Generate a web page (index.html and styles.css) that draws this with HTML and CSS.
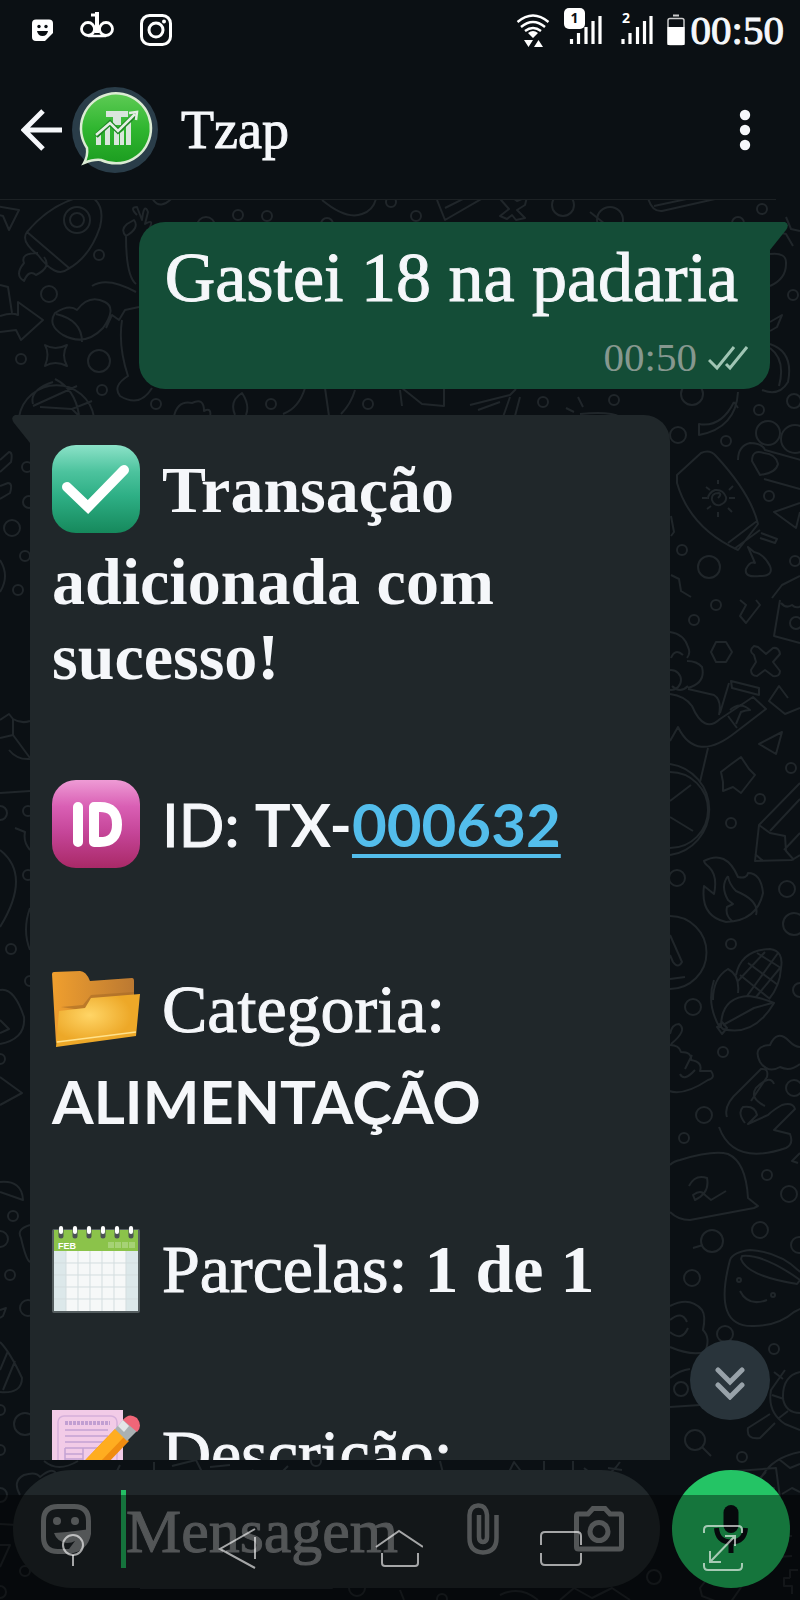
FILE: index.html
```html
<!DOCTYPE html>
<html lang="pt-BR">
<head>
<meta charset="utf-8">
<meta name="viewport" content="width=device-width, initial-scale=1">
<title>Tzap</title>
<link rel="stylesheet" href="styles.css">
</head>
<body>
<div class="phone">
  <div class="status-bar">
    <div class="status-group notices">
      <svg width="22" height="60" viewBox="32 0 22 60" aria-hidden="true"><path fill="#fff" d="M36 19.500h13q4 0 4 4V33l-8 8h-9q-4 0-4-4V23.500q0-4 4-4z"/><circle cx="39" cy="26.500" r="1.700" fill="#0b1014"/><circle cx="46" cy="26.500" r="1.700" fill="#0b1014"/><path d="M37 31h11q-1 5-5.500 5T37 31z" fill="#0b1014"/></svg>
      <svg width="34" height="60" viewBox="80 0 34 60" fill="none" stroke="#fff" aria-hidden="true"><circle cx="88" cy="29" r="6.500" stroke-width="2.800"/><circle cx="106" cy="29" r="6.500" stroke-width="2.800"/><path d="M88 36h18" stroke-width="2.500"/><path d="M97 12v21" stroke-width="4"/><path d="M91 15h4" stroke-width="3"/></svg>
      <svg width="32" height="60" viewBox="136 0 32 60" fill="none" stroke="#fff" stroke-width="3" aria-hidden="true"><rect x="137.500" y="15.500" width="29" height="29" rx="8"/><circle cx="152" cy="30" r="7"/><circle cx="160" cy="21.500" r="2" fill="#fff" stroke="none"/></svg>
    </div>
    <div class="status-group signals">
      <svg width="34" height="60" viewBox="515 0 34 60" fill="none" stroke="#fff" stroke-width="2.400" aria-hidden="true"><path d="M516.500 22q15.500-13 31 0M520 27q12-10 24 0M524 31q8-6 16 0"/><path fill="#fff" stroke="none" d="M527 33q5-4 10 0l-5 5zM523 40h9l-4.500 7zM533 47h9l-4.500-7z"/></svg>
      <svg width="43" height="60" viewBox="563 0 43 60" aria-hidden="true"><path stroke="#fff" stroke-width="3.200" d="M570.500 39v5M577.500 33v11M585 27v17M592 21v23M599 16v28"/><rect x="563" y="8" width="21" height="21" rx="5" fill="#fff"/><text class="sim" x="573.500" y="23" text-anchor="middle" fill="#0b1014">1</text></svg>
      <svg width="32" height="60" viewBox="621 0 32 60" aria-hidden="true"><path stroke="#fff" stroke-width="3.200" d="M623 39v5M630 33v11M637.500 27v17M644.500 21v23M651 16v28"/><text class="sim" x="626" y="23" text-anchor="middle" fill="#fff">2</text></svg>
      <svg width="18" height="60" viewBox="667 0 18 60" aria-hidden="true"><path d="M673 15.500h6" stroke="#ccc" stroke-width="2"/><rect x="668" y="18.500" width="16" height="26" rx="2" fill="none" stroke="#ccc" stroke-width="1.500"/><path d="M667.500 27h17v18h-17z" fill="#fff"/></svg>
    </div>
    <time class="clock">00:50</time>
  </div>

  <header class="chat-header">
    <button class="plain" type="button" aria-label="Voltar"><svg width="42" height="42" viewBox="0 0 42 42" fill="none" stroke="#f5f7fa" stroke-width="5"><path d="M22 2L3 21l19 19M3 21h38"/></svg></button>
    <svg class="avatar" width="86" height="86" viewBox="0 0 86 86" aria-hidden="true">
      <defs><linearGradient id="bubble" x2="0" y2="1"><stop stop-color="#5ecb55"/><stop offset=".5" stop-color="#30b630"/><stop offset="1" stop-color="#1c9d20"/></linearGradient></defs>
      <circle cx="43" cy="43" r="43" fill="#2a3d49"/>
      <path fill="url(#bubble)" stroke="#dcebd4" stroke-width="2.500" d="M15 61A35 35 0 1 1 29 73q-7-1-17 3 4-7 3-15z"/>
      <path fill="#d9e6dc" d="M34 24h22v6h-7v8h-8v-8h-7zM24 50l5-4v12h-5zM33 43l5-4v19h-5zM42 43l5 3v12h-5zM48 46l4-3v15h-4zM54 38l5-5v25h-5z"/>
      <path fill="none" stroke="#1d8522" stroke-width="5" d="M24 49l14-13 8 8 18-17"/>
      <path fill="none" stroke="#e4eee4" stroke-width="2.500" d="M24 48l14-12 8 8 17-17M57 26l8-1-1 8"/>
    </svg>
    <h1 class="contact">Tzap</h1>
    <button class="plain menu" type="button" aria-label="Mais opções"><svg width="12" height="44" viewBox="0 0 12 44" fill="#f5f7fa"><circle cx="6" cy="7" r="5.200"/><circle cx="6" cy="22" r="5.200"/><circle cx="6" cy="37" r="5.200"/></svg></button>
  </header>

  <main class="conversation">
    <svg class="wallpaper" viewBox="0 200 800 1400" preserveAspectRatio="xMidYMin slice" aria-hidden="true">
      <g id="dots">
        <circle cx="238" cy="215" r="5"/><circle cx="267" cy="216" r="5"/><circle cx="391" cy="202" r="5"/><circle cx="99" cy="255" r="5"/><circle cx="49" cy="294" r="8"/><circle cx="99" cy="361" r="11"/><circle cx="21" cy="359" r="5"/><circle cx="102" cy="390" r="5"/><circle cx="156" cy="404" r="5"/><circle cx="271" cy="404" r="5"/><circle cx="368" cy="404" r="5"/><circle cx="416" cy="216" r="5"/><circle cx="563" cy="205" r="11"/><circle cx="762" cy="209" r="5"/><circle cx="610" cy="220" r="13"/><circle cx="738" cy="223" r="6"/><circle cx="206" cy="226" r="9"/><circle cx="327" cy="224" r="6"/>
        <circle cx="543" cy="402" r="5"/><circle cx="614" cy="400" r="5"/><circle cx="692" cy="394" r="11"/><circle cx="759" cy="410" r="5"/><circle cx="794" cy="401" r="7"/><circle cx="793" cy="295" r="5"/><circle cx="678" cy="435" r="8"/><circle cx="726" cy="441" r="5"/><circle cx="768" cy="433" r="12"/><circle cx="795" cy="439" r="14"/><circle cx="769" cy="496" r="5"/><circle cx="682" cy="550" r="5"/><circle cx="709" cy="567" r="11"/><circle cx="795" cy="561" r="5"/>
        <circle cx="12" cy="528" r="8"/><circle cx="25" cy="556" r="5"/><circle cx="18" cy="590" r="5"/><circle cx="27" cy="467" r="5"/><circle cx="29" cy="502" r="6"/><circle cx="0" cy="813" r="7"/><circle cx="28" cy="811" r="5"/><circle cx="28" cy="875" r="5"/><circle cx="11" cy="949" r="5"/><circle cx="30" cy="981" r="5"/><circle cx="0" cy="1059" r="5"/><circle cx="13" cy="1216" r="5"/><circle cx="0" cy="1239" r="8"/><circle cx="10" cy="1275" r="5"/><circle cx="28" cy="1308" r="8"/><circle cx="0" cy="1410" r="5"/><circle cx="25" cy="1424" r="11"/><circle cx="0" cy="1450" r="5"/><circle cx="0" cy="1495" r="7"/><circle cx="25" cy="1571" r="5"/><circle cx="0" cy="1592" r="6"/>
        <circle cx="716" cy="605" r="5"/><circle cx="694" cy="620" r="5"/><circle cx="791" cy="768" r="5"/><circle cx="760" cy="799" r="5"/><circle cx="731" cy="823" r="5"/><circle cx="677" cy="878" r="8"/><circle cx="787" cy="889" r="8"/><circle cx="794" cy="924" r="11"/><circle cx="731" cy="944" r="5"/><circle cx="693" cy="1007" r="8"/><circle cx="800" cy="990" r="7"/><circle cx="723" cy="1052" r="5"/><circle cx="794" cy="1088" r="8"/><circle cx="704" cy="1115" r="8"/><circle cx="684" cy="1138" r="5"/><circle cx="767" cy="1175" r="5"/><circle cx="789" cy="1194" r="8"/><circle cx="760" cy="1230" r="8"/><circle cx="712" cy="1241" r="11"/><circle cx="799" cy="1245" r="8"/><circle cx="692" cy="1278" r="8"/><circle cx="725" cy="1334" r="8"/><circle cx="774" cy="1349" r="5"/><circle cx="742" cy="1457" r="5"/><circle cx="695" cy="1440" r="10"/><circle cx="654" cy="1577" r="7"/><circle cx="357" cy="1588" r="8"/><circle cx="442" cy="1599" r="5"/><circle cx="316" cy="1461" r="5"/>
      </g>
      <path d="M-4 206l23 4-10 20-6-14-8-2M27 232Q52 202 88 195q18 8 12 32-10 30-32 42-12 10-30-14-18-14-11-23zM27 232l42 36M38 253q-18 0-14 10-10 12 0 18 5-12 12-6 16-8 8-18"/>
      <circle cx="77" cy="220" r="13"/><circle cx="77" cy="220" r="7"/>
      <path d="M152 198q8 14 22-2M322 200q24 20 40 14 12-4 14-16M137 215q-8-8 0-8l5 13q2-18 6-8l-3 12q10-6 4 5M127 224q-7 6-1 12 14-8 8-16zM126 236q0 40 10 48M92 286q15-10 44 6M55 313q-8 12 8 22 22 12 40-7 14-20 2-26-16-8-28 8-8-6-22 3zM56 314q26 6 26 28M106 328l6-13 7 5 6-10 14-3M122 320q-4 26 6 56-16 10-8 20 20 12 32-8M0 316q12-4 18-1v-13l25 18-22 20-5-10-16 2M0 285l8 2 4 26M45 345q10 6 22 0-6 10 0 21-12-6-22 0 5-12 0-21z"/>
      <path d="M19 417a38 38 0 0 1 75 0M33 404q-4-14 20-22M55 379q20 10 24 36M33 406l44-20M40 407l32 2 20-8M72 409l8 8M174 416q4-16 18-13 12-6 12 8 8-4 6 6M235 415q-6-14 7-22 8 12 4 22M283 414q16-6 22-26M325 388l4 28M341 414q10-10 14-24M402 388l20 16 22 2V388M402 406l-2-16M470 405l40-10 6-6M478 410l22-8M510 397l-7 20M520 397l-5 19M566 408l8 4M578 397l5 10M580 414q30-3 40 3"/>
      <path d="M437 200l8 20 38-22M445 208l20-10M500 216l9-7-8-9 8-5 8 6 10-4-2 8-8 5 8 8-9 2-4-5-5 4zM590 212l15 12M648 198q4 14 14 13l62-14M654 206l42-9M773 231l13 3 7 12M786 217l5 12 9 2M770 254q17-2 16 10 0 15-16 22M770 322l12-7-5 12-7 4M770 344q24 8 18 38-9 15-26 8M770 348q16 12 9 38M738 392q-2 36-39 43v-11q22 4 35-22M734 402l4 6"/>
      <path d="M677 475l24-22q9-4 15 3 35 38 42 68l-20 26q-48-22-61-67 0-6 0-8zM757 521l-29 22M760 530l-26 19M761 533l16 6-2 4-15-5M748 547l6 5q10 2 16 14 4 10-10 10-16 2-14-7 4-8 9-6zM738 460q0-14 12-17 12 0 15 7l36 10M764 479l36 10M764 453q-12-4-12 8l8 14q16-2 18-11-2-10-14-11zM800 503l-26 9 22 16 4-16M671 516l3 16-3 4M671 575l8 4 2 12 10 6M772 598l10-13 18-9"/>
      <path d="M718 484v-4M718 517v-5M702 498h5M729 498h6M706 487l4 3M728 508l4 4M729 490l4-4M707 509l4-3M718 498q4-4 1-5-8 0-7 7 2 6 8 5 7-3 6-8-3-8-11-7-7 3-7 9"/>
      <path d="M0 460l9-8q4 0 2 10L0 472M0 486l8-3q5 0 2 10l-10 6M0 560q10 16 0 32M0 720l9-6 4 5q8 5 17 2M0 738l13-3V719M13 735l17 23M9 750q8 10 21 9M0 793l30-2M15 828l10 4q-2 10 5 18M0 850q32 25 0 77M30 908q-8 22 0 42M0 990q14-3 24 27 2 22-24 27M0 1020l9 9-9 4M0 1077l22 16-22 12M0 1182q22-2 23 18L0 1192M30 1225q-14 4-9 13 5 22 9 24M0 1310l6-2-3 8-3 2M0 1342q10 10 22 36 0 16-22 14M8 1351L0 1370M15 1361l-12 29"/>
      <path d="M740 600l6 5-6 11 6 7 14-18-4-5M780 600l-6 36 26 7M781 603q5 6 11 2 4 4 9 1"/><circle cx="796" cy="623" r="6"/>
      <path d="M670 632q14 2 18 15 3 6-1 11M671 658q4-10 12-3M687 661q10 0 15 6 4 16-14 21M672 686q8 8 16 0M716 642h10l6 10-6 10h-10l-5-10zM754 655q-6-4 0-9l4 1 8 7 7-6q6-1 7 6l-7 8 7 9q0 6-7 5l-8-6-8 6q-6 0-6-6l5-8z"/>
      <circle cx="671" cy="680" r="10"/>
      <path d="M670 694q15 2 22 12 12 28 28 13l33-22 13 12-30 23q-40 32-58-5l-8 14M688 689l26 6q8 5 5 20M720 713l9-30M731 681l28 7v7l-27-7zM728 716l9 12M730 710q10-9 20 0-4 0-9 2l-5 12M708 748l-8 34M788 698l-9-12-10 15 16 13 15-6M759 744l23-12-6 22zM730 765l11-8 8 12 6 6-14 18-8-6-10 4v-9l-2-10z"/>
      <path d="M670 764a46 46 0 0 1 0 91M670 772a38 38 0 0 1 0 76M670 801l21-16M670 817l23 14M800 783l-41 42-4 36 37-1 8-5M759 825l11 8 15 3 1 15 8 9M770 831l30-32M784 850l16-17M755 854l8 7M704 861q22-12 34 16 9 2 10-4 13 0 15 20-6 28-37 29-26-6-22-36l10 8q4-18-5-27-5-4-5-6zM728 876q1 8 8 15 24 10 20 24M728 876q-8 10 0 24l5 4-6 3q-2 8 5 14"/>
      <path d="M670 916a36 36 0 0 1 0 73M670 935l12 27q-4 7-9 0l-3-7M670 979l15-2M713 1000q0-22 15-31 12 6 10 24M720 1028q-14-24-6-48M721 1027q0-30 28-31 14 2 25 7-20 34-51 26zM723 1025l31-17 18-5M717 1027l5-5 5 6-5 6zM736 975q5-25 34-26 14 2 11 19-1 18-12 31M740 975l30 24M748 963l30 22M757 953l24 15M778 953l-31 43M765 952l-28 30M780 968l-24 29"/>
      <path d="M760 1062q-8-16 10-17 7-16 19-4 6 6 11 6M760 1062q8 12 20 5 10 5 20-3M670 1034q2-10 9-10 9 6-8 20M670 1045q9 0 11 7 11 0 10 8 12 2 9 11h11q5 7-3 9-24 16-39 11M685 1069l7-14M680 1074q4 8 15-4M727 1117q-4-12 12-26l22-22q8-1 6 8l-16 24M765 1106q-16-8-9-18 14-14 18-4M745 1123q-8-10-2-16 12-2 14 8l-9 9 20-9q5-5 14-10 11-3 13 4l-21 21 16 4q4 10-4 14-53 18-67-21"/>
      <path d="M670 1165q4-4 10-5 33-10 48-6 18 8 20 44l10 8-4 2-64 12q-12 0-20-8M689 1186q6-12 18-8 3 15-12 22l-2-5q8-6 12 0l6 5 15-9M693 1248l10-3M800 1153l-8 8 6 2M730 1260q3-8 20-10 30 2 50 22M730 1260q-18 68 24 66 24 0 40-14l8-4M742 1256q22-2 58 24l-3 4q-50-8-56-25zM740 1291q8 16 27 9"/>
      <circle cx="739" cy="1280" r="2"/><circle cx="773" cy="1295" r="2"/>
      <path d="M670 1306q20-10 32 4 4 6 1 20 8 8 2 22-14 4-35-5M670 1320q12-10 17 2M670 1332q12 10 18-4M670 1378q10-8 20-9M670 1407l30-2"/><circle cx="681" cy="1389" r="7"/>
      <path d="M800 1372q-18 4-17 27 3 14 17 14M785 1370l-14 20q-4 22 14 34l15 6M783 1379l-9-7M784 1399l-12-4M788 1411l-9 7M770 1414l-22 14q-2 12 12 10l15-15M702 1447l9 9"/>
      <path d="M760 1480q10-22 40-28M780 1460l10 8 10-4M782 1494l10-6 8 4M760 1478l6-6M708 1480l14-8 54-4 4 30M750 1492h8v8h-8zM766 1488h8v8h-8zM768 1504h7v8h-7zM762 1536h30M762 1536v22l30-2M790 1578v-8h8M790 1578h-6v8h8v8"/>
      <path d="M20 1495q-8-14 4-20 12-4 16 2 12-10 16-4M44 1461q14 12 34 0M120 1465l-8 16M154 1462v16M172 1466l24-6 8 16M210 1467l20-2M252 1470l20 12 16-16M440 1461l4 16M506 1478l8-16 12 16M544 1461v18M573 1461v20M584 1468q20 18 36-6M608 1468l14 2M140 1588h192l-70-22-30 22M400 1590l4 10M500 1595q20-10 38 5M560 1600l14-12 18 10 20-10 18 12M700 1588l14-18 28 16-14 20-26-10zM0 1524l34 2M0 1545h10l-10 22"/>
    </svg>

    <div class="messages">
      <article class="bubble sent">
        <svg class="tail" width="18" height="30" viewBox="0 0 18 30" aria-hidden="true"><path d="M0 0h15q5 2 1 8L0 28z"/></svg>
        <p class="text">Gastei 18 na padaria</p>
        <div class="meta"><time>00:50</time><svg width="40" height="26" viewBox="0 0 40 26" fill="none" stroke="#a0c5b4" stroke-width="3" role="img" aria-label="Entregue"><path d="M1 15l8 8L26 2M18 19l4 4L39 2"/></svg></div>
      </article>

      <article class="bubble received">
        <svg class="tail" width="18" height="30" viewBox="0 0 18 30" aria-hidden="true"><path d="M18 0H3q-5 2-1 8l16 20z"/></svg>
        <div class="row strong">
          <svg class="emoji" viewBox="0 0 88 88" role="img" aria-label="Concluído"><defs><linearGradient id="green" x2="0" y2="1"><stop stop-color="#8ce2c8"/><stop offset=".3" stop-color="#4dc39e"/><stop offset=".58" stop-color="#2eaf85"/><stop offset="1" stop-color="#16895c"/></linearGradient></defs><rect width="88" height="88" rx="24" fill="url(#green)"/><path d="M15 42l21 20 36-37" fill="none" stroke="#fff" stroke-width="10" stroke-linecap="round"/></svg>
          <span>Transação</span>
        </div>
        <p class="text strong follow">adicionada com sucesso!</p>
        <div class="row code">
          <svg class="emoji" viewBox="0 0 88 88" role="img" aria-label="Identificação"><defs><linearGradient id="pink" x2="0" y2="1"><stop stop-color="#ee9bd5"/><stop offset=".3" stop-color="#d95fb4"/><stop offset=".6" stop-color="#c54598"/><stop offset="1" stop-color="#a92967"/></linearGradient></defs><rect width="88" height="88" rx="24" fill="url(#pink)"/><path d="M26 27v35M42 27v35h6q17 0 17-17.500T48 27z" fill="none" stroke="#fff" stroke-width="10" stroke-linecap="round" stroke-linejoin="round"/></svg>
          <span>ID: <b>TX-<a href="#tx-000632">000632</a></b></span>
        </div>
        <div class="row">
          <svg class="emoji" viewBox="0 0 88 88" role="img" aria-label="Pasta"><defs><radialGradient id="folder" cx=".4" cy=".4"><stop stop-color="#ffd566"/><stop offset="1" stop-color="#eda828"/></radialGradient><linearGradient id="back"><stop stop-color="#f09f2e"/><stop offset="1" stop-color="#bb7932"/></linearGradient></defs><path fill="url(#back)" d="M0 9q0-2 2-2l26-1q6 0 10 10l42-3q2 0 2 3v30L4 78z"/><path fill="#a76a24" opacity=".6" d="M9 42l22-2 8-10 43-3v8L36 46z"/><path fill="url(#folder)" d="M7 46l26-3 6-10 49-4-4 42-80 11z"/><path fill="none" stroke="#ffe28c" stroke-width="1.500" d="M5 77l79-10"/></svg>
          <span>Categoria:</span>
        </div>
        <p class="text code follow"><b>ALIMENTAÇÃO</b></p>
        <div class="row">
          <svg class="emoji" viewBox="0 0 88 88" role="img" aria-label="Calendário"><rect y="4" width="88" height="84" rx="2" fill="#555e60"/><path fill="#f6f8f8" d="M2 22h84v64H2z"/><path fill="#dce8ea" d="M2 25h12v61H2zM74 25h12v61H74z"/><path fill="#8bc34a" d="M2 5h84v21H2z"/><path d="M14 26v60M26 26v60M38 26v60M50 26v60M62 26v60M74 26v60M2 38h84M2 50h84M2 62h84M2 74h84" stroke="#d3dddf"/><g stroke="#4b5254" stroke-width="5" stroke-linecap="round"><path d="M9 4v7M23 4v7M37 4v7M51 4v7M65 4v7M79 4v7"/></g><g stroke="#fff" stroke-width="4" stroke-linecap="round"><path d="M9 3v4M23 3v4M37 3v4M51 3v4M65 3v4M79 3v4"/></g><text class="month" x="6" y="24">FEB</text><path d="M56 20h27" stroke="#a6d276" stroke-width="6" stroke-dasharray="6 1"/></svg>
          <span>Parcelas: <b>1 de 1</b></span>
        </div>
        <div class="row">
          <svg class="emoji" viewBox="0 0 88 88" role="img" aria-label="Anotação"><path d="M0 0h71v88H0z" fill="#f2cbe7"/><rect x="6" y="6" width="59" height="90" rx="6" fill="none" stroke="#d5b0da" stroke-width="1.500"/><path d="M13 20h43M13 26h43M13 32h43M13 38h43M13 44h18M13 49h18M31 38v20M13 38v20" stroke="#c3a3d3" stroke-width="1.500"/><path d="M13 13h45" stroke="#c19fd2" stroke-width="4" stroke-dasharray="3 1"/><path d="M63 19l14 12-47 49-16 7 5-22z" fill="#f08c10"/><path d="M63 19l9 8-47 49-6-11z" fill="#ffad20"/><path d="M63 19l9-10 13 12-10 10z" fill="#aab1b3"/><path d="M66 16l5-6 6 6-5 6z" fill="#e3e6e7"/><path d="M71 10q6-8 14-2 6 8 0 14z" fill="#f06678"/></svg>
          <span>Descrição:</span>
        </div>
      </article>
    </div>
    <button class="scroll-down" type="button" aria-label="Ir para o fim"><svg width="30" height="34" viewBox="0 0 30 34" fill="none" stroke="#98a2a9" stroke-width="5" stroke-linecap="round"><path d="M3 4l12 12L27 4M3 19l12 12 12-12"/></svg></button>
  </main>

  <form class="composer">
    <div class="field">
      <button class="plain" type="button" aria-label="Emojis"><svg width="50" height="50" viewBox="0 0 50 50" fill="none" stroke="#8b8f92" stroke-width="5"><path d="M29 47.500H17Q2.500 47.500 2.500 33V17Q2.500 2.500 17 2.500h16Q47.500 2.500 47.500 17v10"/><g fill="#8b8f92" stroke="none"><circle cx="16" cy="17" r="4"/><circle cx="34" cy="17" r="4"/><path d="M13 29l13-1 24-3v5Q47 47 28 50v-5l6-8q-3 2-8 2-10-1-13-10z"/></g></svg></button>
      <label class="entry"><span class="caret"></span><input type="text" placeholder="Mensagem" aria-label="Mensagem"></label>
      <button class="plain" type="button" aria-label="Anexar"><svg width="32" height="52" viewBox="0 0 32 52" fill="none" stroke="#8b8f92" stroke-width="4.500"><path d="M29.500 12v23q0 14-13.500 14.500Q2.500 49 2.500 35V12Q3 3 11 2.500T20 12v22q0 5-4 5t-4-5V12"/></svg></button>
      <button class="plain camera" type="button" aria-label="Câmera"><svg width="50" height="46" viewBox="0 0 50 46" fill="none" stroke="#8b8f92" stroke-width="5"><path d="M4 8h10l5-5.500h12L36 8h10q1.500 0 1.500 2v31q0 2-2 2h-41q-2 0-2-2V10q0-2 1.500-2z"/><circle cx="25" cy="25.500" r="9"/></svg></button>
    </div>
    <button class="mic" type="button" aria-label="Gravar áudio"><svg width="36" height="50" viewBox="0 0 36 50" fill="none" stroke="#0b1014" stroke-width="5"><rect x="10.500" y="1" width="15" height="28" rx="7.500" fill="#0b1014" stroke="none"/><path d="M3.500 24q1 14 14.500 14t14.500-14M18 38v11"/></svg></button>
  </form>

  <nav class="system-nav" aria-label="Navegação do sistema">
    <button type="button" aria-label="Fixar"><svg viewBox="0 0 50 50"><circle cx="25" cy="22" r="10"/><path d="M25 32v11"/></svg></button>
    <button type="button" aria-label="Voltar"><svg viewBox="0 0 50 50"><path d="M44 6L9 26l35 19M44 14v22"/></svg></button>
    <button type="button" aria-label="Início"><svg viewBox="0 0 50 50"><path d="M3 24L26 8l24 16M9 30v10q0 3 3 3h30q3 0 3-3V30"/></svg></button>
    <button type="button" aria-label="Recentes"><svg viewBox="0 0 50 50"><path d="M5 22V13q0-4 4-4h32q4 0 4 4v9M5 30v8q0 4 4 4h32q4 0 4-4v-8"/></svg></button>
    <button type="button" aria-label="Expandir"><svg viewBox="0 0 50 50"><path d="M6 10V7q0-4 4-4h30q4 0 4 4v3M6 40v3q0 4 4 4h30q4 0 4-4v-3M12 39l25-26M27 13h10v10M12 28v11h11"/></svg></button>
  </nav>
</div>
</body>
</html>
```

FILE: styles.css
```css
* {
  box-sizing: border-box;
}

body {
  margin: 0;
  background: #0b1014;
  color: #f5f7fa;
  font-family: "Liberation Serif", "Times New Roman", serif;
}

.phone {
  position: relative;
  display: flex;
  flex-direction: column;
  height: 100vh;
  overflow: hidden;
}

svg {
  display: block;
  flex: none;
}

.plain {
  display: block;
  padding: 0;
  border: 0;
  background: none;
}

/* Status bar */
.status-bar {
  display: flex;
  align-items: center;
  height: 60px;
  padding: 0 16px 0 32px;
}

.status-group {
  display: flex;
}

.notices {
  gap: 26px;
}

.signals {
  gap: 14px;
  margin-left: auto;
}

.sim {
  font: bold 14px "Open Sans", sans-serif;
}

.clock {
  margin-left: 6px;
  font-size: 41px;
  line-height: 64px;
  -webkit-text-stroke: 1px currentColor;
}

/* Header */
.chat-header {
  display: flex;
  align-items: center;
  height: 140px;
  margin-right: 24px;
  padding: 0 25px 0 21px;
  border-bottom: 1px solid #1c2124;
}

.avatar {
  margin-left: 9px;
}

.contact {
  margin: 0 0 0 23px;
  font-size: 54px;
  font-weight: normal;
  line-height: 64px;
  -webkit-text-stroke: 1px currentColor;
}

.menu {
  margin-left: auto;
}

/* Conversation */
.conversation {
  display: flex;
  flex: 1;
  min-height: 0;
  position: relative;
}

.wallpaper {
  position: absolute;
  inset: 0 0 auto;
  width: 100%;
  height: calc(100vh - 200px);
  fill: none;
  stroke: #20262a;
  stroke-width: 2;
  stroke-linejoin: round;
}

.messages {
  position: relative;
  display: flex;
  flex: 1;
  flex-direction: column;
  gap: 26px;
  padding: 22px 30px 0;
  overflow: hidden;
}

.bubble {
  position: relative;
  flex: none;
  font-size: 68px;
  line-height: 75px;
  -webkit-text-stroke: 1px currentColor;
}

.tail {
  position: absolute;
  top: 0;
}

.sent {
  align-self: flex-end;
  padding: 18px 22px 0 26px;
  border-radius: 26px 0 26px 26px;
  background: #144d37;
  font-size: 70px;
}

.sent .tail {
  left: 100%;
  fill: #144d37;
}

.received {
  width: 640px;
  max-width: 100%;
  padding: 19px 22px;
  border-radius: 0 26px 26px 26px;
  background: #20272a;
}

.received .tail {
  right: 100%;
  fill: #20272a;
}

.text {
  margin: 0;
  padding-right: 10px;
}

.meta {
  display: flex;
  align-items: center;
  justify-content: flex-end;
  gap: 11px;
  margin-top: 11px;
  color: #86988f;
  font-size: 41px;
  line-height: 63px;
  -webkit-text-stroke: 0;
}

.row {
  display: flex;
  align-items: center;
  gap: 22px;
  height: 110px;
}

.emoji {
  width: 88px;
  height: 88px;
}

.strong,
.bubble b {
  font-weight: bold;
  -webkit-text-stroke: 0;
}

.strong {
  font-size: 66px;
}

.follow {
  margin-bottom: 75px;
}

.row + .row {
  margin-top: 75px;
}

.code {
  font-family: Lato, sans-serif;
  font-size: 60px;
}

.received a {
  color: #53bdeb;
  text-decoration-thickness: 4px;
  text-underline-offset: 7px;
}

.month {
  fill: #fff;
  font: bold 9px "Liberation Sans", sans-serif;
  -webkit-text-stroke: 0;
}

.scroll-down {
  position: absolute;
  right: 30px;
  bottom: 40px;
  display: grid;
  place-items: center;
  width: 80px;
  height: 80px;
  padding: 6px 0 0;
  border: 0;
  border-radius: 50%;
  background: #29343b;
}

/* Composer */
.composer {
  position: relative;
  display: flex;
  align-items: center;
  gap: 12px;
  padding: 10px 10px 12px 13px;
}

.field {
  display: flex;
  flex: 1;
  align-items: center;
  min-width: 0;
  height: 118px;
  padding: 0 36px 0 28px;
  border-radius: 59px;
  background: #20272a;
}

.entry {
  display: flex;
  flex: 1;
  align-items: center;
  min-width: 0;
  margin-left: 30px;
}

.caret {
  width: 5px;
  height: 78px;
  background: #24c065;
}

.entry input {
  flex: 1;
  min-width: 0;
  padding: 4px 0 0;
  border: 0;
  outline: 0;
  background: none;
  color: #f5f7fa;
  font-family: inherit;
  font-size: 62px;
  line-height: 76px;
  -webkit-text-stroke: 1px currentColor;
}

.entry input::placeholder {
  color: #8b8f92;
  opacity: 1;
}

.camera {
  margin-left: 75px;
}

.mic {
  display: grid;
  place-items: center;
  width: 118px;
  height: 118px;
  padding: 0;
  border: 0;
  border-radius: 50%;
  background: #24c465;
}

/* Translucent system navigation laid over the composer */
.system-nav {
  position: absolute;
  inset: auto 0 0;
  display: flex;
  align-items: center;
  justify-content: space-between;
  height: 105px;
  padding: 0 52px 0 48px;
  background: rgba(0, 0, 0, 0.4);
}

.system-nav button {
  padding: 0;
  border: 0;
  background: none;
}

.system-nav svg {
  width: 50px;
  height: 50px;
  fill: none;
  stroke: rgba(255, 255, 255, 0.62);
  stroke-width: 2;
}
```
